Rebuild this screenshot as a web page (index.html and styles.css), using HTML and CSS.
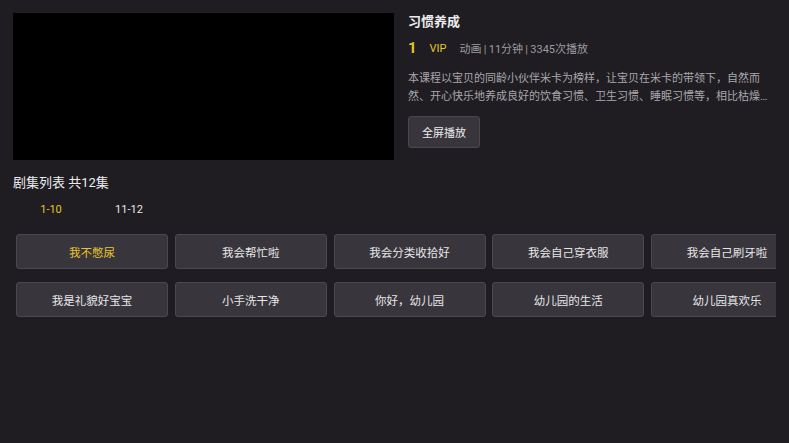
FILE: index.html
```html
<!DOCTYPE html>
<html lang="zh-CN">
<head>
  <meta charset="UTF-8">
  <meta name="viewport" content="width=device-width, initial-scale=1.0">
  <title>习惯养成</title>
  <link rel="stylesheet" href="styles.css">
</head>
<body>
  <div class="page">
    <div class="top">
      <div class="player"></div>
      <div class="info">
        <h1 class="title">习惯养成</h1>
        <div class="meta">
          <span class="num">1</span>
          <span class="vip">VIP</span>
          <span class="detail">动画&thinsp;|&thinsp;11分钟&thinsp;|&thinsp;3345次播放</span>
        </div>
        <p class="desc">本课程以宝贝的同龄小伙伴米卡为榜样，让宝贝在米卡的带领下，自然而然、开心快乐地养成良好的饮食习惯、卫生习惯、睡眠习惯等，相比枯燥的说教，更能让宝贝接受和喜爱。</p>
        <button class="play">全屏播放</button>
      </div>
    </div>

    <h2 class="list-title">剧集列表 共12集</h2>
    <div class="tabs">
      <span class="tab active">1-10</span>
      <span class="tab">11-12</span>
    </div>

    <div class="episodes">
      <button class="ep active">我不憋尿</button>
      <button class="ep">我会帮忙啦</button>
      <button class="ep">我会分类收拾好</button>
      <button class="ep">我会自己穿衣服</button>
      <button class="ep">我会自己刷牙啦</button>
      <button class="ep">我是礼貌好宝宝</button>
      <button class="ep">小手洗干净</button>
      <button class="ep">你好，幼儿园</button>
      <button class="ep">幼儿园的生活</button>
      <button class="ep">幼儿园真欢乐</button>
    </div>
  </div>
</body>
</html>
```

FILE: styles.css
```css
body {
  margin: 0;
  background-color: #1f1d22;
  color: #e6e6e8;
  font-family: Roboto, "Noto Sans CJK SC", sans-serif;
}

.page {
  padding: 13px 0 0 13px;
  height: 430px;
  overflow: hidden;
}

.top {
  display: flex;
  gap: 14px;
}

.player {
  width: 381px;
  height: 147px;
  background: #000;
  flex-shrink: 0;
}

.info {
  width: 370px;
}

.title {
  margin: 0;
  font-size: 13px;
  font-weight: bold;
  line-height: 18px;
  color: #ececee;
}

.meta {
  display: flex;
  align-items: center;
  margin-top: 8px;
  height: 18px;
  font-size: 11px;
}

.num {
  color: #e6c42c;
  font-size: 15px;
  font-weight: bold;
  margin-right: 13px;
}

.vip {
  color: #e6c42c;
  margin-right: 13px;
}

.detail {
  color: #9c9ba0;
}

.desc {
  margin: 13px 0 0;
  font-size: 11px;
  line-height: 18px;
  color: #a8a7ac;
  display: -webkit-box;
  -webkit-line-clamp: 2;
  -webkit-box-orient: vertical;
  overflow: hidden;
}

.play {
  margin-top: 10px;
  width: 72px;
  height: 32px;
  border: 1px solid #4b4950;
  border-radius: 3px;
  background: #38363c;
  color: #ececee;
  font-family: inherit;
  font-size: 11px;
  padding: 0;
}

.list-title {
  margin: 14px 0 0;
  font-size: 13px;
  font-weight: normal;
  line-height: 18px;
  color: #ececee;
}

.tabs {
  display: flex;
  margin: 9px 0 0 -1px;
  height: 18px;
}

.tab {
  width: 78px;
  text-align: center;
  font-size: 11px;
  line-height: 18px;
  color: #e6e6e8;
}

.tab.active {
  color: #e6c42c;
}

.episodes {
  display: grid;
  grid-template-columns: repeat(5, 152px);
  column-gap: 6.75px;
  row-gap: 13px;
  margin: 15px 0 0 3px;
  width: 760px;
  overflow: hidden;
}

.ep {
  height: 35px;
  padding: 0;
  border: 1px solid #4b4950;
  border-radius: 3px;
  background: #38363c;
  color: #e6e6e8;
  font-family: inherit;
  font-size: 11.5px;
}

.ep.active {
  color: #e6c42c;
}
```
